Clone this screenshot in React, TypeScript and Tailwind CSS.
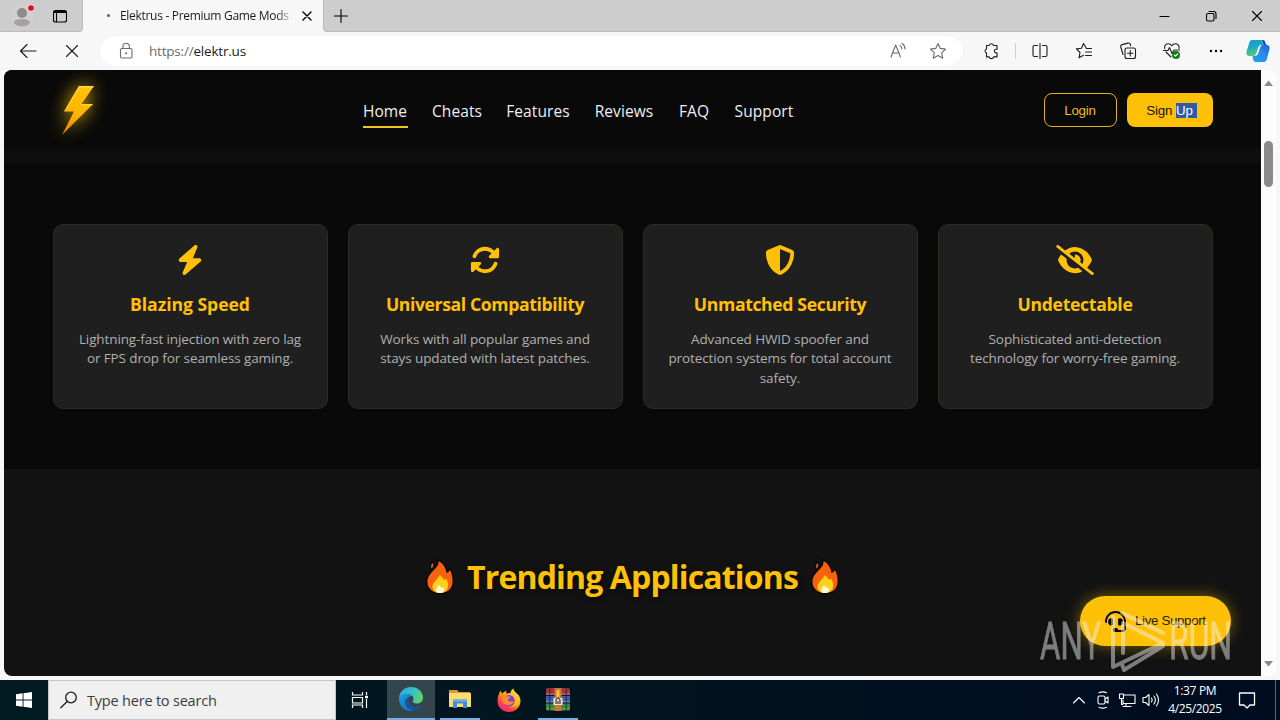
import type { ReactNode } from "react";
import { FaHeadset } from "react-icons/fa";
import { FaBolt, FaEyeSlash, FaRotate, FaShieldHalved } from "react-icons/fa6";

const navItems = [
  { label: "Home", width: "w-[45px]", active: true },
  { label: "Cheats", width: "w-[50px]" },
  { label: "Features", width: "w-[63px]" },
  { label: "Reviews", width: "w-[60px]" },
  { label: "FAQ", width: "w-[31px]" },
  { label: "Support", width: "w-[60px]" },
];

const features = [
  {
    icon: <FaBolt size={30} />,
    title: "Blazing Speed",
    tracking: "tracking-[-0.05px]",
    lines: ["Lightning-fast injection with zero lag", "or FPS drop for seamless gaming."],
  },
  {
    icon: <FaRotate size={30} />,
    title: "Universal Compatibility",
    tracking: "tracking-[-0.38px]",
    lines: ["Works with all popular games and", "stays updated with latest patches."],
  },
  {
    icon: <FaShieldHalved size={30} />,
    title: "Unmatched Security",
    tracking: "tracking-[-0.36px]",
    lines: ["Advanced HWID spoofer and", "protection systems for total account", "safety."],
  },
  {
    icon: <FaEyeSlash className="h-[30px] w-[38px]" />,
    title: "Undetectable",
    tracking: "tracking-[-0.3px]",
    lines: ["Sophisticated anti-detection", "technology for worry-free gaming."],
  },
];

function Cell({ className, children }: { className: string; children?: ReactNode }) {
  return <div className={`flex h-full shrink-0 items-center justify-center ${className}`}>{children}</div>;
}

function Line({ size = 18, className = "", children }: { size?: number; className?: string; children: ReactNode }) {
  return (
    <svg
      width={size}
      height={size}
      viewBox={`0 0 ${size} ${size}`}
      fill="none"
      stroke="currentColor"
      strokeWidth="1.1"
      strokeLinecap="round"
      strokeLinejoin="round"
      className={`shrink-0 ${className}`}
    >
      {children}
    </svg>
  );
}

function TabStrip() {
  return (
    <div className="flex h-8 bg-[#f7f7f7]">
      <div className="flex w-[83px] rounded-br-[4px] border-b border-r border-[#bdbdbd] bg-[#cdcdcd]">
        <Cell className="w-11">
          <svg width="24" height="24" viewBox="0 0 24 24">
            <circle cx="12" cy="12" r="11.5" fill="#d2cfce" />
            <circle cx="12" cy="9" r="5" fill="#8f8d8c" />
            <path d="M4 19c0-3 3-4 8-4s8 1 8 4c-2 2.500-4.500 3.500-8 3.500S6 21.500 4 19Z" fill="#a5a3a2" />
            <circle cx="21" cy="4" r="3.500" fill="#e8d5d5" />
            <circle cx="21" cy="4" r="2.800" fill="#e00b1c" />
          </svg>
        </Cell>
        <Cell className="w-8">
          <Line size={16} className="text-black">
            <rect x="1.500" y="2.500" width="13" height="11.500" rx="2" />
            <path d="M2.500 4h11" strokeWidth="2" />
            <path d="M4.500 5v8.500" />
          </Line>
        </Cell>
      </div>
      <div className="flex w-[240px] items-center bg-[#f7f7f7] pl-[24px]">
        <span className="mb-[2px] mr-[10px] h-[3px] w-[3px] rounded-full bg-[#2b6ca8]" />
        <span className="w-[174px] overflow-hidden whitespace-nowrap text-[12px] tracking-[-0.3px] text-[#1b1b1b] [mask-image:linear-gradient(to_right,black_90%,transparent)]">
          Elektrus - Premium Game Mods | E
        </span>
        <Line size={14} className="ml-[6px] text-black">
          <path d="m3 3 8 8M11 3l-8 8" strokeWidth="1.400" />
        </Line>
      </div>
      <div className="flex flex-1 rounded-bl-[4px] border-b border-l border-[#bdbdbd] bg-[#cdcdcd]">
        <Cell className="w-[33px]">
          <Line size={16} className="text-black">
            <path d="M8 1.500v13M1.500 8h13" />
          </Line>
        </Cell>
        <div className="flex-1" />
        <Cell className="w-[46px]">
          <Line size={12} className="text-black">
            <path d="M1 6.500h9" />
          </Line>
        </Cell>
        <Cell className="w-[46px]">
          <Line size={12} className="text-black">
            <rect x="1.500" y="3.500" width="7.500" height="7.500" rx="1.500" />
            <path d="M4 1.500h4.500a2.500 2.500 0 0 1 2.500 2.500v4.500" />
          </Line>
        </Cell>
        <Cell className="w-[46px]">
          <Line size={12} className="text-black">
            <path d="m1.500 1.500 9 9M10.500 1.500l-9 9" />
          </Line>
        </Cell>
      </div>
    </div>
  );
}

function Toolbar() {
  return (
    <div className="flex h-[38px] items-center bg-[#f7f7f7] text-[#1c1c1c]">
      <Cell className="w-[56px]">
        <Line>
          <path d="M17 9H1.500M8 2.500 1.500 9 8 15.500" />
        </Line>
      </Cell>
      <Cell className="w-[32px]">
        <Line size={14}>
          <path d="m1.500 1.500 11 11M12.500 1.500l-11 11" />
        </Line>
      </Cell>
      <div className="ml-3 flex h-[30px] w-[863px] items-center rounded-full bg-white pl-[17px] pr-[6px] text-[#6b6b6b] shadow-[0_0_2px_rgba(0,0,0,0.06)]">
        <Line>
          <rect x="3.500" y="6.500" width="11.500" height="9.500" rx="1.500" />
          <path d="M6 6.500V4.500a3.200 3.200 0 0 1 6.400 0v2" />
          <circle cx="9.200" cy="11.200" r=".5" fill="currentColor" />
        </Line>
        <span className="ml-[14px] text-[13.500px] tracking-[-0.2px]">
          https://<span className="text-[#1b1b1b]">elektr.us</span>
        </span>
        <div className="flex-1" />
        <Line>
          <path d="m2 15 4.700-12L11.500 15M3.600 11h6.300M11 3.500c1.200.8 1.800 2 1.800 3.500M13 1.500c2 1.200 3 3 3 5.500" />
        </Line>
        <Line className="ml-[22px] mr-[10px]">
          <path d="m9 1.500 2.300 4.900 5.300.7-3.900 3.700 1 5.400L9 13.600l-4.700 2.600 1-5.400L1.400 7.100l5.300-.7Z" />
        </Line>
      </div>
      <Cell className="ml-[6px] w-11">
        <Line>
          <path d="M4.500 3.500h2.700a2.200 2.200 0 0 1 4.300 0h3.500v3.800h-.8a1.800 1.800 0 0 0 0 3.600h.8v4h-3.500a2.200 2.200 0 0 1-4.300 0H4.500v-4a2.100 2.100 0 0 1 0-4Z" />
        </Line>
      </Cell>
      <Cell className="w-[5px]">
        <span className="h-4 w-px bg-[#cfcfcf]" />
      </Cell>
      <Cell className="w-11">
        <Line>
          <path d="M9 1.500v15M6.500 3.500h-3a1.500 1.500 0 0 0-1.500 1.500v8a1.500 1.500 0 0 0 1.500 1.500h3M11.500 3.500h3A1.500 1.500 0 0 1 16 5v8a1.500 1.500 0 0 1-1.500 1.500h-3" />
        </Line>
      </Cell>
      <Cell className="w-11">
        <Line>
          <path d="M16.500 6.500h-5L8.500 1.500 6.400 6.200l-5 .7L5 10.500l-1 5.300 4.500-2.500M10.500 10h6M10.500 13.500h6" />
        </Line>
      </Cell>
      <Cell className="w-11">
        <Line>
          <rect x="6" y="6" width="10.500" height="10.500" rx="2" />
          <path d="M11.250 8.500v5.500M8.500 11.250H14M4 12.500 1.800 5a2 2 0 0 1 1.400-2.400l5.800-1.500a2 2 0 0 1 2.400 1.400l.3 1.300" />
        </Line>
      </Cell>
      <Cell className="w-11">
        <Line>
          <path d="M1.800 6.500C1 3.500 3.200 1.800 5.200 1.800c1.600 0 2.700.7 3.600 2 .9-1.300 2-2 3.600-2 2.200 0 4.200 1.800 3.600 4.700M3 10l5 5M.5 8.500H5l1.500-3 2.500 6 2-3.500h5.500" />
          <circle cx="13" cy="13" r="4" fill="#107c10" stroke="none" />
          <path d="m11.300 13 1.200 1.200 2.300-2.400" stroke="white" />
        </Line>
      </Cell>
      <Cell className="w-11">
        <svg width="14" height="4" viewBox="0 0 14 4" fill="black">
          <circle cx="2" cy="2" r="1.200" />
          <circle cx="7" cy="2" r="1.200" />
          <circle cx="12" cy="2" r="1.200" />
        </svg>
      </Cell>
      <Cell className="w-[40px]">
        <svg width="24" height="22" viewBox="0 0 24 22">
          <defs>
            <linearGradient id="copilotA" x1="0" y1="0" x2="0.300" y2="1">
              <stop offset="0" stopColor="#1795d8" />
              <stop offset="0.500" stopColor="#1aa9c2" />
              <stop offset="1" stopColor="#5ccb76" />
            </linearGradient>
            <linearGradient id="copilotB" x1="1" y1="0" x2="0" y2="1">
              <stop offset="0" stopColor="#1c62d4" />
              <stop offset="0.500" stopColor="#2b8df0" />
              <stop offset="1" stopColor="#1fa3f0" />
            </linearGradient>
          </defs>
          <path d="M6 0h8c2 0 2.600 1.200 3 3l.5 2h-2c-2 0-2.800 1-3.400 3L10.500 13c-.7 2-1.500 3-3.500 3H3.500C.5 16 0 13.500.6 11.500l2.400-8C3.600 1.300 4.300 0 6 0Z" fill="url(#copilotA)" />
          <path d="M18 22h-8c-2 0-2.600-1.200-3-3l-.5-3H8c2 0 2.800-1 3.400-3L13.500 8c.7-2 1.500-3 3.500-3h3.500c3 0 3.500 2.500 2.900 4.500l-2.400 9C20.400 20.700 19.700 22 18 22Z" fill="url(#copilotB)" />
          <path d="M14 0c2 0 2.600 1.200 3 3l.5 2H21c-1-.2-1.300-1-1.700-2.500C18.900.8 18.500 0 17 0Z" fill="#154fae" />
          <path d="M13.500 6.500c.5-.8 1.200-1.200 2-1.200-.8.700-1.300 1.700-1.700 3l-1.500 4.700c-.6 1.700-1.300 2.500-2.800 2.800H8.800c.9-.5 1.400-1.300 1.900-2.800Z" fill="white" />
        </svg>
      </Cell>
    </div>
  );
}

function BoltLogo() {
  return (
    <svg width="50" height="60" viewBox="0 0 50 60" className="overflow-visible drop-shadow-[0_0_9px_rgba(255,200,7,0.85)]">
      <defs>
        <linearGradient id="bolt" x1="0.600" y1="0" x2="0.400" y2="1">
          <stop offset="0" stopColor="#ffc400" />
          <stop offset="0.600" stopColor="#ffb400" />
          <stop offset="1" stopColor="#ee8100" />
        </linearGradient>
      </defs>
      <path d="M26 6h15L28.500 24H40L9 55l12-23.500H11Z" fill="url(#bolt)" />
      <path d="M26 6h15l-1 1.500H26.800L12.500 30.500 11 31.500Z" fill="#ffe36b" opacity=".7" />
      <path d="M28.500 24H40l-1.500 1.500H27.500Z" fill="#ffdc4a" opacity=".7" />
    </svg>
  );
}

function SiteHeader() {
  return (
    <header className="h-[94px] bg-[linear-gradient(to_bottom,#090909_78%,#0e0e0e_90%,#0e0e0e_98%,#090909)]">
      <div className="mx-auto flex h-[80px] w-[1160px] items-center">
        <div className="w-[310px]">
          <BoltLogo />
        </div>
        <nav className="flex gap-[24.500px] text-[15.500px] font-medium text-[#f0f0f0]">
          {navItems.map((item) => (
            <a
              key={item.label}
              className={`flex h-[35px] shrink-0 items-center justify-center whitespace-nowrap border-b-2 pt-[5px] tracking-[0.1px] ${item.width} ${
                item.active ? "border-[#f5c422]" : "border-transparent"
              }`}
            >
              {item.label}
            </a>
          ))}
        </nav>
        <div className="ml-auto flex gap-[10px] font-['Liberation_Sans',Arial,sans-serif] text-[13.330px]">
          <button className="h-[34px] w-[73px] rounded-[8px] border border-[#e5b318] pt-px tracking-[-0.2px] text-[#f0bd1c]">Login</button>
          <button className="h-[34px] w-[86px] whitespace-nowrap rounded-[8px] bg-[#ffc107] pl-[4px] pt-px tracking-[-0.1px] text-[#1a1405]">
            Sign <span className="bg-[#3059a8] pr-[4px] text-white">Up</span>
          </button>
        </div>
      </div>
    </header>
  );
}

function Flame() {
  return (
    <svg width="28" height="36" viewBox="0 0 28 36" className="shrink-0">
      <path
        d="M12.500 2C18 5 20 10 20.500 14c1.500-.5 2.500-1.500 3.500-3 2 4 3 8.500 2.500 13-.8 6.500-5.500 10-12.500 10S2 30 1.500 24C1 19 3.500 15.500 7 12c3-3 6-6 5.500-10Z"
        fill="#f7630c"
        stroke="#080808"
        strokeWidth="2.500"
        paintOrder="stroke"
      />
      <path d="M6.500 4C8 6 7.500 8 5.500 9.500 4.500 7.500 5 5.500 6.500 4Z" fill="#d95b1d" stroke="#080808" strokeWidth="2" paintOrder="stroke" />
      <path d="M14 16c2 2 3 3.500 4 5 .8-.2 1.300-.6 2-1.500 2 3.500 3 6.500 1.500 10-1.500 3-4 4.500-7.500 4.500S7 32 6.500 28.500C6 24 11 21 14 16Z" fill="#ffd21a" />
      <path d="M12.500 26c1.500.8 2.300 1.800 2.800 3 .7-.2 1.200-.5 1.700-1 1.500 2 1.300 4-.2 5.400-2 .8-4.500.8-6.300-.2-1.200-2.600 1.200-4.200 2-7.200Z" fill="#fff7dc" />
    </svg>
  );
}

function Watermark() {
  return (
    <svg width="200" height="70" viewBox="0 0 200 70" className="pointer-events-none absolute bottom-[1px] right-[25px]" opacity="0.48">
      <g fill="#f0f0f0" stroke="#f0f0f0" strokeWidth="0.8" fontFamily="Roboto, sans-serif" fontSize="52">
        <text x="4" y="54" textLength="61" lengthAdjust="spacingAndGlyphs">ANY</text>
        <text x="133" y="54" textLength="63" lengthAdjust="spacingAndGlyphs">RUN</text>
      </g>
      <g fill="none" stroke="#f0f0f0" strokeWidth="4" strokeLinecap="round" strokeLinejoin="round">
        <path d="M87 48V18l40 20-50 24V12" />
        <path d="M86 8l41 20M86 59l2 6 39-24" />
      </g>
    </svg>
  );
}

function Site() {
  return (
    <div className="relative h-full w-[1257px] overflow-hidden bg-[#121212]">
      <SiteHeader />
      <section className="bg-[#090909] py-[60px]">
        <div className="mx-auto grid w-[1160px] grid-cols-4 gap-5">
          {features.map((f) => (
            <article key={f.title} className="flex h-[185px] flex-col items-center rounded-[10px] border border-[#2d2b24] bg-[#1f1f1f] pt-5 text-center">
              <div className="flex h-[30px] items-center text-[#ffc107]">{f.icon}</div>
              <h3 className={`mb-[13px] mt-[17px] whitespace-nowrap text-[17.600px] font-bold leading-[25px] text-[#ffc107] ${f.tracking}`}>{f.title}</h3>
              {f.lines.map((line) => (
                <p key={line} className="whitespace-nowrap text-[13.500px] leading-[19.400px] tracking-[-0.11px] text-[#b0b0b0]">
                  {line}
                </p>
              ))}
            </article>
          ))}
        </div>
      </section>
      <section className="pt-[85px]">
        <h2 className="flex items-center justify-center gap-[13px] whitespace-nowrap text-[32px] font-bold leading-[46px] tracking-[-0.850px] text-[#ffc107] [text-shadow:2px_2px_4px_rgba(0,0,0,0.5)]">
          <Flame />
          Trending Applications
          <Flame />
        </h2>
      </section>
      <button className="absolute bottom-[30px] right-[30px] flex h-[50px] w-[151px] items-center whitespace-nowrap rounded-full bg-[#ffc107] pl-[25px] font-['Liberation_Sans',Arial,sans-serif] text-[13.330px] tracking-[-0.350px] text-[#241b04] shadow-[0_0_15px_rgba(255,193,7,0.45)]">
        <FaHeadset size={21} className="mr-[9px] text-black" />
        Live Support
      </button>
      <Watermark />
    </div>
  );
}

function Scrollbar() {
  return (
    <div className="flex w-[15px] flex-col items-center bg-[#fcfcfc] pb-[9px] pt-[10px]">
      <svg width="9" height="6" viewBox="0 0 9 6">
        <path d="M4.500 .5 9 6H0Z" fill="#8b8b8b" />
      </svg>
      <div className="mt-[55px] h-[46px] w-[9px] rounded-full bg-[#8b8b8b]" />
      <div className="flex-1" />
      <svg width="9" height="6" viewBox="0 0 9 6">
        <path d="M4.500 5.500 0 0h9Z" fill="#8b8b8b" />
      </svg>
    </div>
  );
}

function EdgeIcon() {
  return (
    <svg width="24" height="24" viewBox="0 0 24 24">
      <defs>
        <linearGradient id="edgeTop" x1="0" y1="0.300" x2="1" y2="0.600">
          <stop offset="0" stopColor="#2fa9e0" />
          <stop offset="0.500" stopColor="#35c1c9" />
          <stop offset="1" stopColor="#5fd46a" />
        </linearGradient>
        <linearGradient id="edgeBody" x1="0" y1="0" x2="1" y2="1">
          <stop offset="0" stopColor="#1b9de2" />
          <stop offset="1" stopColor="#1465b4" />
        </linearGradient>
      </defs>
      <path d="M0 12C0 5 5 0 12 0s12 5 12 10.500c0 4-3 6-6.300 6-2.700 0-4-1-4-1.700 0-.6.800-1 .8-2.800C14.500 9 12 7 8.500 7 3.500 7 0 9.500 0 12Z" fill="url(#edgeTop)" />
      <path d="M0 12c0-3 3.500-5 8.500-5 2 0 4 .8 5 2-3 0-4.500 2-4.500 4.500 0 4 4 6.500 8 6.500 2 0 3.500-.5 4.700-1.200C19.500 22 16 24 12 24 5 24 0 18.500 0 12Z" fill="url(#edgeBody)" />
      <path d="M9 13.500C9 18 13 20 17 20c2 0 3.500-.5 4.700-1.200C20 21.500 17 23.300 14.500 23.700 9 23 5.500 19 6 14.500 6.300 11.500 8.500 9 13.500 9c-3 0-4.500 2-4.500 4.500Z" fill="#134a8f" opacity=".75" />
    </svg>
  );
}

function ExplorerIcon() {
  return (
    <svg width="22" height="20" viewBox="0 0 22 20">
      <path d="M0 1h8l2 2h11v5H0Z" fill="#d99a28" />
      <path d="M0 4h22v14H0Z" fill="#fbdc72" />
      <path d="M4 19v-8.500h14V19h-4v-4.500H8V19Z" fill="#3f90cf" />
      <path d="M4 10.500h14v2H4Z" fill="#6db5e4" />
    </svg>
  );
}

function FirefoxIcon() {
  return (
    <svg width="24" height="24" viewBox="0 0 24 24">
      <defs>
        <linearGradient id="fox" x1="0.850" y1="0.100" x2="0.200" y2="1">
          <stop offset="0" stopColor="#ffe940" />
          <stop offset="0.450" stopColor="#ff980e" />
          <stop offset="0.750" stopColor="#ff3750" />
          <stop offset="1" stopColor="#e0308c" />
        </linearGradient>
      </defs>
      <path d="M2 6c.3-1.500 1-2.500 2-3.500 0 1.500.5 2.300 1.500 3C6.500 4 8 3 9.500 3 9 4 9 5 9.500 5.500l4-.5C13.500 3 15 1 16.500.5c0 2.500 2 3.500 4 5.500 2 2 3 4.500 3 7C23.500 19.500 18 24 12 24S.5 19.500.5 13C.5 10.500 1 8 2 6Z" fill="url(#fox)" />
      <circle cx="12" cy="12.500" r="5.500" fill="#7542e5" />
      <path d="M5 8c2-1 4-.5 5.500.5h3c0 1.500-1 2-2.500 2.500-.5 2 1.500 3 3.500 2.500 1.500-.5 2.500.5 1.500 1.500C13 18.500 6 17.500 5 12Z" fill="#ff8a2f" />
      <path d="M16 5c3 2 4 5 3 9-1 3-4 5-7 5 4 1 9-1 9.500-6C21.500 9 19 6 16 5Z" fill="#ffcf33" opacity=".7" />
    </svg>
  );
}

function WinrarIcon() {
  return (
    <svg width="24" height="23" viewBox="0 0 24 23">
      <path d="M1 0h22l1 2v5H0V2Z" fill="#a8323c" />
      <path d="M0 8h24v6.500H0Z" fill="#3b5cb4" />
      <path d="M0 15.500h24V21l-1 1.500H1L0 21Z" fill="#3c8a45" />
      <path d="M0 5.500h24v1.200H0ZM0 13h24v1.200H0ZM0 20.500h24v1H0Z" fill="#d9d4c4" opacity=".4" />
      <path d="M3 0h1.500v23H3ZM19.500 0H21v23h-1.500Z" fill="#231d25" opacity=".55" />
      <path d="M8.500 0h7v23h-7Z" fill="#c8792a" />
      <path d="M10.500 2h3v7h-3Z" fill="#f6c14e" />
      <rect x="7.500" y="10" width="9" height="7" fill="#ece6da" />
      <path d="M10 16v-3.500a2 2 0 0 1 4 0V16M12 13v3" fill="none" stroke="#453021" strokeWidth="1.200" />
    </svg>
  );
}

function Taskbar() {
  return (
    <div className="flex h-10 bg-[linear-gradient(to_right,#011a22,#01151f_45%,#000f20_75%,#000c20)] text-white">
      <Cell className="w-12">
        <svg width="16" height="16" viewBox="0 0 16 16" fill="white">
          <path d="M0 2.200 6.600 1.300v6.200H0ZM7.500 1.200 16 0v7.500H7.500ZM0 8.400h6.600v6.300L0 13.800ZM7.500 8.400H16V16l-8.500-1.200Z" />
        </svg>
      </Cell>
      <div className="flex w-[288px] items-center border border-[#c6c6c6] bg-[#f0f0f0] pl-[11px]">
        <Line className="text-[#1f1f1f]">
          <circle cx="11" cy="6.500" r="5.300" strokeWidth="1.300" />
          <path d="M7.200 10.500.8 16.800" strokeWidth="1.300" />
        </Line>
        <span className="ml-[9px] whitespace-nowrap pt-px text-[14.500px] tracking-[-0.2px] text-[#3b3b3b]">Type here to search</span>
      </div>
      <Cell className="w-[51px]">
        <svg width="18" height="18" viewBox="0 0 18 18" fill="none" stroke="white" strokeWidth="1.200" className="mr-[3px]">
          <path d="M1.500 1v3h10V1M1.500 17v-3h10v3M1.500 6.500h10v5.500h-10ZM15.500 1v3M15.500 8v9" />
          <path d="M14 6h3" strokeWidth="2.500" />
        </svg>
      </Cell>
      <div className="flex w-12 flex-col bg-[#33464d]">
        <Cell className="min-h-0 flex-1 shrink">
          <EdgeIcon />
        </Cell>
        <span className="h-[2px] bg-[#76b0e6]" />
      </div>
      <div className="flex w-[50px] flex-col items-center">
        <Cell className="min-h-0 flex-1 shrink">
          <ExplorerIcon />
        </Cell>
        <span className="h-[2px] w-10 bg-[#76b0e6]" />
      </div>
      <Cell className="w-12">
        <FirefoxIcon />
      </Cell>
      <div className="flex w-[50px] flex-col items-center">
        <Cell className="min-h-0 flex-1 shrink">
          <WinrarIcon />
        </Cell>
        <span className="h-[2px] w-10 bg-[#76b0e6]" />
      </div>
      <div className="flex-1" />
      <Cell className="w-6">
        <Line size={14}>
          <path d="m1.500 10 5.500-5.500 5.500 5.500" />
        </Line>
      </Cell>
      <Cell className="w-6">
        <Line>
          <rect x="4" y="5" width="7" height="8" rx="1.500" />
          <path d="m11 8 3-2v6l-3-2M5 1.800c2.500-1.200 5-1.200 7.500 0M5 16.200c2.500 1.200 5 1.200 7.500 0" />
        </Line>
      </Cell>
      <Cell className="w-6">
        <Line>
          <path d="M6 4h11v8.500H5V9M8 12.500V15M5 15.500h8M1.500 3h4v4.500h-4ZM3.500 7.500v6H5" />
        </Line>
      </Cell>
      <Cell className="w-6">
        <Line>
          <path d="M1 6.500h2.500L7 3.500v11l-3.500-3H1ZM9.500 7c.8 1.300.8 2.700 0 4M12 5c1.700 2.500 1.700 5.500 0 8M14.500 3c2.700 4 2.700 8 0 12" />
        </Line>
      </Cell>
      <div className="flex w-[64px] flex-col items-center justify-center whitespace-nowrap text-center text-[12px] leading-[18px] tracking-[-0.350px]">
        <span>1:37 PM</span>
        <span>4/25/2025</span>
      </div>
      <Cell className="w-[48px] pr-[8px]">
        <Line>
          <path d="M1.500 2h15v12H12l-3 3-3-3H1.500Z" strokeWidth="1.300" />
        </Line>
      </Cell>
      <div className="w-[5px] border-l border-[#5b6472]" />
    </div>
  );
}

export default function App() {
  return (
    <div className="flex h-[720px] w-[1280px] flex-col overflow-hidden bg-[#f7f7f7] font-['Open_Sans','Noto_Sans',sans-serif]">
      <TabStrip />
      <Toolbar />
      <main className="mx-1 mb-1 flex h-[606px] overflow-hidden rounded-[8px]">
        <Site />
        <Scrollbar />
      </main>
      <Taskbar />
    </div>
  );
}
